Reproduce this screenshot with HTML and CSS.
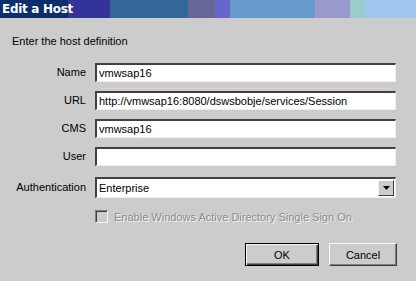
FILE: index.html
```html
<!DOCTYPE html>
<html>
<head>
<meta charset="utf-8">
<link rel="stylesheet" href="styles.css">
</head>
<body>
<div class="dialog">
  <div class="titlebar">
    <div class="bands">
      <span class="b b1"></span><span class="b b2"></span><span class="b b3"></span><span class="b b4"></span><span class="b b5"></span><span class="b b6"></span><span class="b b7"></span><span class="b b8"></span><span class="b b9"></span>
    </div>
    <span class="title">Edit a Host</span>
  </div>
  <div class="content">
    <div class="intro">Enter the host definition</div>
    <div class="form">
      <label class="lbl">Name</label>
      <div class="field"><div class="input">vmwsap16</div><div class="artifact"></div></div>
      <label class="lbl">URL</label>
      <div class="field"><div class="input">http://vmwsap16:8080/dswsbobje/services/Session</div></div>
      <label class="lbl">CMS</label>
      <div class="field"><div class="input">vmwsap16</div></div>
      <label class="lbl">User</label>
      <div class="field"><div class="input"></div></div>
    </div>
    <div class="form auth">
      <label class="lbl">Authentication</label>
      <div class="select">
        <span class="selval">Enterprise</span>
        <span class="arrowbtn"><svg width="7" height="4" viewBox="0 0 7 4"><path d="M0 0h7L3.5 4z" fill="#000"/></svg></span>
      </div>
    </div>
    <div class="check">
      <span class="box"></span>
      <span class="checklbl">Enable Windows Active Directory Single Sign On</span>
    </div>
    <div class="buttons">
      <button class="btn default">OK</button>
      <button class="btn">Cancel</button>
    </div>
  </div>
</div>
</body>
</html>
```

FILE: styles.css
```css
html, body {
  margin: 0;
  padding: 0;
  background: #cccccc;
}
body {
  width: 416px;
  height: 281px;
  overflow: hidden;
  font-family: "Liberation Sans", Arial, sans-serif;
  font-size: 11px;
  color: #000;
}
.titlebar {
  position: relative;
  height: 18px;
}
.bands {
  display: flex;
  height: 18px;
}
.b { display: block; height: 18px; }
.b1 { width: 68px; background: #0c2f6c; }
.b2 { width: 42px; background: #333399; }
.b3 { width: 78px; background: #336699; }
.b4 { width: 27px; background: #666699; }
.b5 { width: 15px; background: #6666cc; }
.b6 { width: 85px; background: #6699cc; }
.b7 { width: 35px; background: #9999cc; }
.b8 { width: 15px; background: #99cccc; }
.b9 { flex: 1; background: #9fc6ee; }
.title {
  position: absolute;
  left: 2px;
  top: 2px;
  color: #fff;
  font-family: "DejaVu Sans", sans-serif;
  font-weight: bold;
  font-size: 12px;
  line-height: 14px;
  letter-spacing: -0.3px;
}
.content {
  padding: 17px 0 0 0;
}
.intro {
  padding-left: 12px;
  line-height: 13px;
  height: 13px;
}
.form {
  display: grid;
  grid-template-columns: 86px 301px;
  column-gap: 9px;
  row-gap: 9px;
  margin-top: 15px;
  align-items: center;
}
.lbl {
  text-align: right;
  line-height: 13px;
}
.field { position: relative; }
.input {
  box-sizing: border-box;
  height: 19px;
  background: #fff;
  border-top: 2px solid #404040;
  border-left: 2px solid #404040;
  border-bottom: 1px solid #eeeeee;
  border-right: 1px solid #eeeeee;
  padding: 0 2px;
  line-height: 16px;
  white-space: nowrap;
  overflow: hidden;
}
.artifact {
  position: absolute;
  left: 5px;
  right: 6px;
  top: 25px;
  height: 1px;
  background: #ecd0c2;
}
.auth {
  margin-top: 11px;
}
.select {
  box-sizing: border-box;
  height: 21px;
  background: #fff;
  border-top: 2px solid #404040;
  border-left: 2px solid #404040;
  border-bottom: 1px solid #eeeeee;
  border-right: 1px solid #eeeeee;
  display: flex;
  align-items: center;
  justify-content: space-between;
}
.selval {
  padding-left: 2px;
  line-height: 16px;
}
.arrowbtn {
  box-sizing: border-box;
  width: 16px;
  height: 16px;
  margin-right: 1px;
  background: #cccccc;
  border-top: 1px solid #f4f4f4;
  border-left: 1px solid #f4f4f4;
  border-right: 1px solid #404040;
  border-bottom: 1px solid #404040;
  display: flex;
  align-items: center;
  justify-content: center;
}
.check {
  display: flex;
  align-items: center;
  margin: 12px 0 0 95px;
  height: 13px;
}
.box {
  box-sizing: border-box;
  width: 13px;
  height: 13px;
  border-top: 1px solid #808080;
  border-left: 1px solid #808080;
  border-right: 1px solid #f4f4f4;
  border-bottom: 1px solid #f4f4f4;
  box-shadow: inset 1px 1px 0 #404040;
}
.checklbl {
  margin-left: 6px;
  color: #8c8c8c;
  text-shadow: 1px 1px 0 #f4f4f4;
}
.buttons {
  display: flex;
  gap: 10px;
  margin: 20px 0 0 245px;
}
.btn {
  box-sizing: border-box;
  font-family: "Liberation Sans", Arial, sans-serif;
  font-size: 11px;
  background: #cccccc;
  color: #000;
  height: 23px;
  width: 68px;
  padding: 0;
  border-top: 1px solid #f8f8f8;
  border-left: 1px solid #f8f8f8;
  border-right: 1px solid #404040;
  border-bottom: 1px solid #404040;
  box-shadow: inset -1px -1px 0 #808080;
}
.btn.default {
  width: 74px;
  border: 1px solid #000;
  box-shadow: inset 1px 1px 0 #f8f8f8, inset -1px -1px 0 #404040, inset -2px -2px 0 #808080;
}
```
